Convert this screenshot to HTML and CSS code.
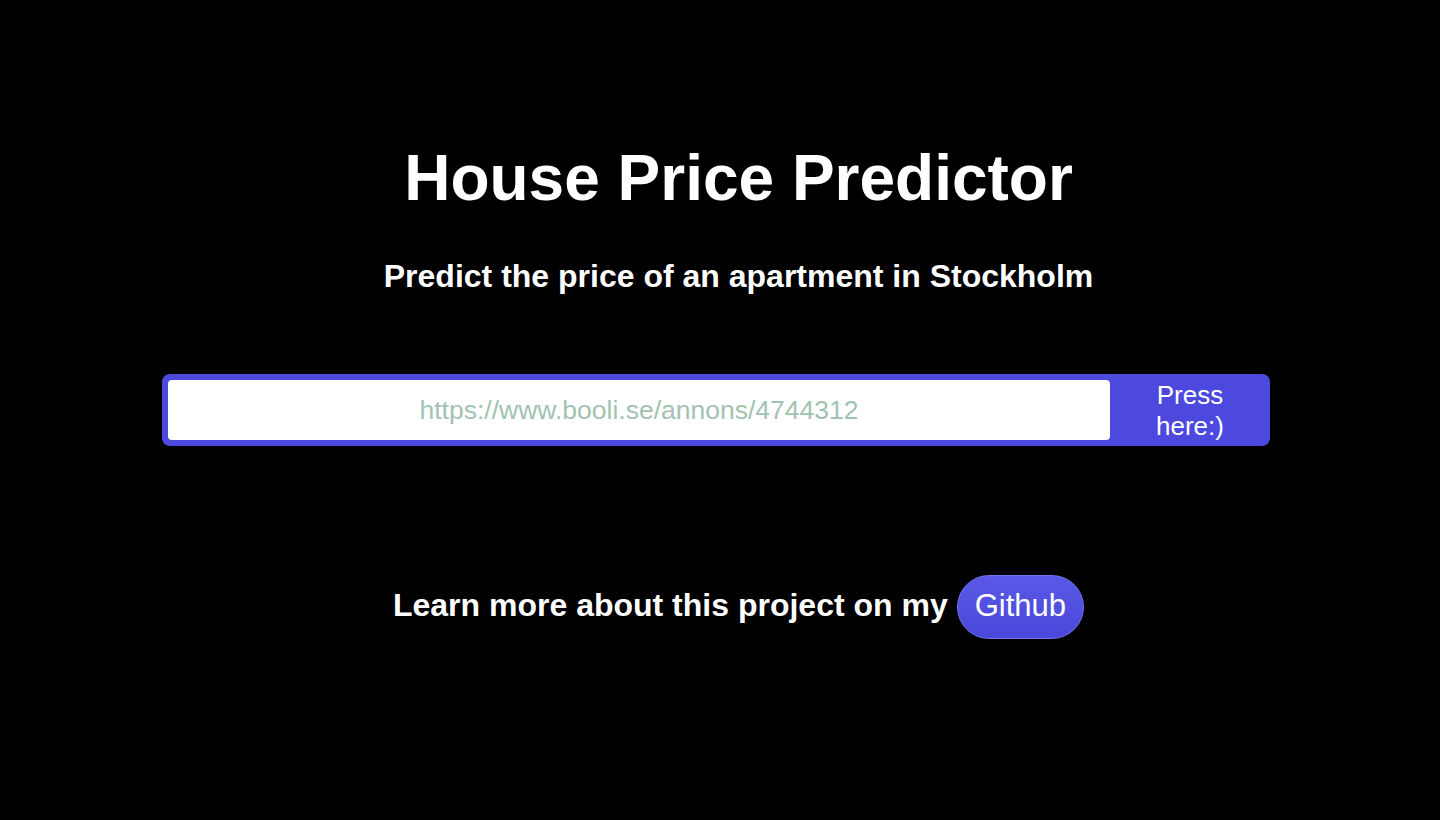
FILE: index.html
```html
<!DOCTYPE html>
<html lang="en">
<head>
<meta charset="utf-8">
<title>House Price Predictor</title>
<link rel="stylesheet" href="styles.css">
</head>
<body>
<main class="page">
  <h1 class="title">House Price Predictor</h1>
  <h2 class="subtitle">Predict the price of an apartment in Stockholm</h2>
  <form class="search" onsubmit="return false">
    <input class="search-input" type="text" placeholder="https://www.booli.se/annons/4744312">
    <button class="search-btn" type="submit">Press here:)</button>
  </form>
  <div class="learn">
    <span class="learn-text">Learn more about this project on my</span>
    <a class="github-btn" href="#">Github</a>
  </div>
</main>
</body>
</html>
```

FILE: styles.css
```css
html, body {
  margin: 0;
  padding: 0;
  background: #000;
}
body {
  font-family: "Liberation Sans", Helvetica, Arial, sans-serif;
  color: #fff;
  width: 1440px;
  height: 820px;
  overflow: hidden;
}
.page {
  display: flex;
  flex-direction: column;
  align-items: center;
  padding: 141px 0 0 37px;
}
.title {
  margin: 0;
  font-size: 64px;
  line-height: 74px;
  font-weight: 700;
}
.subtitle {
  margin: 43px 0 0;
  font-size: 32px;
  line-height: 37px;
  font-weight: 700;
}
.search {
  margin: 79px 45px 0 0;
  width: 1108px;
  height: 72px;
  box-sizing: border-box;
  padding: 6px 0 6px 6px;
  background: #4d49de;
  border-radius: 8px;
  display: flex;
}
.search-input {
  width: 942px;
  height: 60px;
  box-sizing: border-box;
  border: none;
  border-radius: 4px;
  background: #fff;
  font-family: "Liberation Sans", Helvetica, Arial, sans-serif;
  font-size: 26.5px;
  text-align: center;
  color: #333;
  outline: none;
  padding: 0;
}
.search-input::placeholder {
  color: #a2c2b1;
  opacity: 1;
}
.search-btn {
  width: 160px;
  height: 60px;
  padding: 0 14px;
  border: none;
  background: transparent;
  color: #fff;
  font-family: "Liberation Sans", Helvetica, Arial, sans-serif;
  font-size: 26px;
  line-height: 31px;
  cursor: pointer;
}
.learn {
  margin-top: 129px;
  display: flex;
  align-items: baseline;
  gap: 9px;
}
.learn-text {
  font-size: 32px;
  line-height: 37px;
  font-weight: 700;
}
.github-btn {
  display: inline-block;
  padding: 12px 17px 14px;
  font-size: 31px;
  line-height: 36px;
  color: #fff;
  text-decoration: none;
  border: 1px solid #7371ee;
  border-radius: 33px;
  background: linear-gradient(#5a58e6, #4a48da);
}
```
